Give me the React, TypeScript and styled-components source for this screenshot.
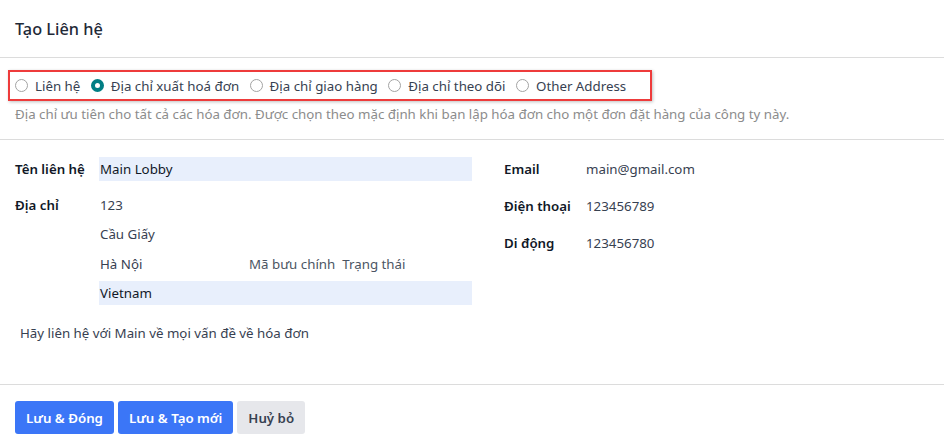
import React, { useState } from "react";
import styled, { createGlobalStyle } from "styled-components";

const GlobalStyle = createGlobalStyle`
  html, body {
    margin: 0;
    padding: 0;
    background: #fff;
  }
  body {
    font-family: "Noto Sans", "Open Sans", sans-serif;
    font-size: 13.3px;
    color: #374151;
  }
`;

const ADDRESS_TYPES = [
  "Liên hệ",
  "Địa chỉ xuất hoá đơn",
  "Địa chỉ giao hàng",
  "Địa chỉ theo dõi",
  "Other Address",
];

const App: React.FC = () => {
  const [type, setType] = useState(1);
  return (
    <Dialog>
      <GlobalStyle />
      <Header>
        <Title>Tạo Liên hệ</Title>
      </Header>
      <TypeSection>
        <Highlight>
          {ADDRESS_TYPES.map((label, i) => (
            <RadioLabel key={label} onClick={() => setType(i)}>
              <Radio checked={type === i} />
              {label}
            </RadioLabel>
          ))}
        </Highlight>
        <Hint>
          Địa chỉ ưu tiên cho tất cả các hóa đơn. Được chọn theo mặc định khi
          bạn lập hóa đơn cho một đơn đặt hàng của công ty này.
        </Hint>
      </TypeSection>
      <Body>
        <Columns>
          <Column>
            <Field>
              <Label>Tên liên hệ</Label>
              <Input filled>Main Lobby</Input>
            </Field>
            <Field>
              <Label>Địa chỉ</Label>
              <AddressLines>
                <Input>123</Input>
                <Input>Cầu Giấy</Input>
                <CityRow>
                  <Input>Hà Nội</Input>
                  <Placeholder>Mã bưu chính</Placeholder>
                  <Placeholder>Trạng thái</Placeholder>
                </CityRow>
                <Input filled>Vietnam</Input>
              </AddressLines>
            </Field>
          </Column>
          <Column wide>
            <Field>
              <Label narrow>Email</Label>
              <Value>main@gmail.com</Value>
            </Field>
            <Field>
              <Label narrow>Điện thoại</Label>
              <Value>123456789</Value>
            </Field>
            <Field>
              <Label narrow>Di động</Label>
              <Value>123456780</Value>
            </Field>
          </Column>
        </Columns>
        <Note>Hãy liên hệ với Main về mọi vấn đề về hóa đơn</Note>
      </Body>
      <Footer>
        <Button primary>Lưu &amp; Đóng</Button>
        <Button primary>Lưu &amp; Tạo mới</Button>
        <Button>Huỷ bỏ</Button>
      </Footer>
    </Dialog>
  );
};

const Dialog = styled.div`
  width: 944px;
  height: 446px;
  display: flex;
  flex-direction: column;
  background: #fff;
  overflow: hidden;
`;

const Header = styled.div`
  height: 58px;
  display: flex;
  align-items: center;
  padding: 0 15px;
  border-bottom: 1px solid #dcdcdc;
  box-sizing: border-box;
`;

const Title = styled.h4`
  margin: 0;
  font-size: 16.3px;
  font-weight: 500;
  color: #1f2937;
`;

const TypeSection = styled.div`
  height: 82px;
  padding: 12px 8px 0;
  box-sizing: border-box;
  border-bottom: 1px solid #dcdcdc;
`;

const Highlight = styled.div`
  display: inline-flex;
  align-items: center;
  gap: 10.5px;
  height: 31px;
  width: 644px;
  box-sizing: border-box;
  padding: 0 5px;
  border: 2px solid #ee3b3b;
  box-shadow: 1px 1px 3px rgba(0, 0, 0, 0.25);
`;

const RadioLabel = styled.label`
  display: inline-flex;
  align-items: center;
  gap: 7px;
  cursor: pointer;
  color: #374151;
`;

const Radio = styled.span<{ checked?: boolean }>`
  width: 13px;
  height: 13px;
  border-radius: 50%;
  box-sizing: border-box;
  border: ${(p) => (p.checked ? "4px solid #017e84" : "1px solid #a3a3a3")};
  background: #fff;
`;

const Hint = styled.div`
  margin: 4px 0 0 7px;
  color: #8c8c8c;
`;

const Body = styled.div`
  flex: 1;
  padding: 17px 15px 0;
  box-sizing: border-box;
  border-bottom: 1px solid #dcdcdc;
`;

const Columns = styled.div`
  display: grid;
  grid-template-columns: 457px 1fr;
  column-gap: 32px;
`;

const Column = styled.div<{ wide?: boolean }>`
  display: flex;
  flex-direction: column;
  gap: ${(p) => (p.wide ? "13px" : "12px")};
`;

const Field = styled.div`
  display: flex;
  align-items: flex-start;
`;

const Label = styled.div<{ narrow?: boolean }>`
  width: ${(p) => (p.narrow ? "82px" : "84px")};
  flex: none;
  font-weight: 600;
  color: #111827;
  line-height: 24px;
`;

const AddressLines = styled.div`
  flex: 1;
  display: flex;
  flex-direction: column;
  gap: 5.4px;
`;

const Input = styled.div<{ filled?: boolean }>`
  flex: 1;
  height: 24px;
  line-height: 24px;
  padding: 0 1px;
  background: ${(p) => (p.filled ? "#e8effc" : "transparent")};
  color: ${(p) => (p.filled ? "#111827" : "#374151")};
`;

const CityRow = styled.div`
  display: flex;
  gap: 7px;
  & > ${Input} {
    flex: none;
    width: 141px;
  }
`;

const Placeholder = styled.div`
  line-height: 24px;
  color: #4b5563;
`;

const Value = styled.div`
  line-height: 24px;
  color: #374151;
`;

const Note = styled.div`
  margin: 19px 0 0 5px;
  color: #374151;
`;

const Footer = styled.div`
  height: 61px;
  display: flex;
  align-items: flex-start;
  gap: 4px;
  padding: 16px 15px 0;
  box-sizing: border-box;
`;

const Button = styled.button<{ primary?: boolean }>`
  height: 33px;
  padding: 0 11px;
  border: none;
  border-radius: 3px;
  font-family: inherit;
  font-size: 13.3px;
  font-weight: 600;
  cursor: pointer;
  background: ${(p) => (p.primary ? "#3b76f7" : "#e6e7eb")};
  color: ${(p) => (p.primary ? "#fff" : "#374151")};
`;

export default App;
